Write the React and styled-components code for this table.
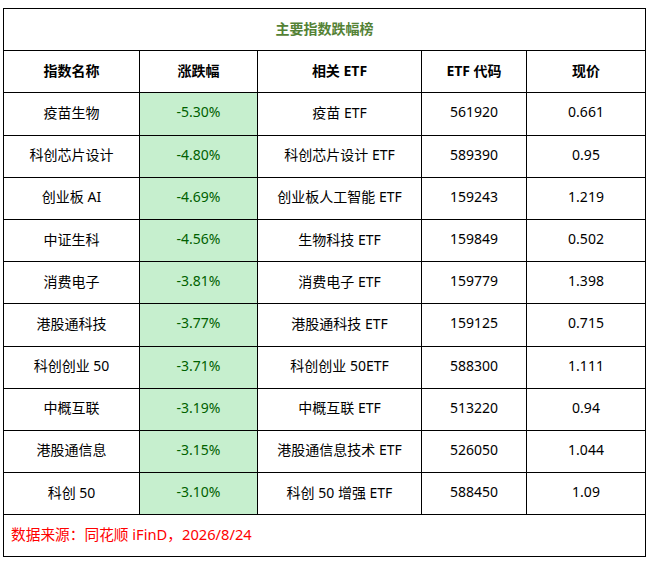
import styled, { createGlobalStyle } from 'styled-components';

const GlobalStyle = createGlobalStyle`
  body {
    margin: 0;
    background: #fff;
    font-family: "Noto Sans", "Noto Sans CJK SC", sans-serif;
  }
`;

const Wrap = styled.div`
  padding: 8px 0 0 3px;
`;

const Table = styled.table`
  border-collapse: collapse;
  table-layout: fixed;
  width: 642px;
  font-size: 14px;
  color: #000;
`;

const Row = styled.tr`
  height: 42.2px;
`;

const Cell = styled.td`
  border: 1px solid #000;
  padding: 0 0 4px;
  text-align: center;
  vertical-align: middle;
  background: ${(p) => (p.$hot ? '#c6efce' : '#fff')};
  color: ${(p) => (p.$hot ? '#006100' : '#000')};
  font-weight: ${(p) => (p.$bold ? 700 : 400)};
`;

const TitleCell = styled(Cell)`
  font-size: 14px;
  font-weight: 700;
  color: #548235;
`;

const NoteCell = styled(Cell)`
  padding-left: 7px;
  text-align: left;
  font-size: 14.7px;
  color: #ff0000;
`;

const cols = [136, 118, 164, 105, 119];

const rows = [
  ['疫苗生物', '-5.30%', '疫苗 ETF', '561920', '0.661'],
  ['科创芯片设计', '-4.80%', '科创芯片设计 ETF', '589390', '0.95'],
  ['创业板 AI', '-4.69%', '创业板人工智能 ETF', '159243', '1.219'],
  ['中证生科', '-4.56%', '生物科技 ETF', '159849', '0.502'],
  ['消费电子', '-3.81%', '消费电子 ETF', '159779', '1.398'],
  ['港股通科技', '-3.77%', '港股通科技 ETF', '159125', '0.715'],
  ['科创创业 50', '-3.71%', '科创创业 50ETF', '588300', '1.111'],
  ['中概互联', '-3.19%', '中概互联 ETF', '513220', '0.94'],
  ['港股通信息', '-3.15%', '港股通信息技术 ETF', '526050', '1.044'],
  ['科创 50', '-3.10%', '科创 50 增强 ETF', '588450', '1.09'],
];

const heads = ['指数名称', '涨跌幅', '相关 ETF', 'ETF 代码', '现价'];

export default function App() {
  return (
    <Wrap>
      <GlobalStyle />
      <Table>
        <colgroup>
          {cols.map((w, i) => (
            <col key={i} style={{ width: w }} />
          ))}
        </colgroup>
        <tbody>
          <Row>
            <TitleCell colSpan={5}>主要指数跌幅榜</TitleCell>
          </Row>
          <Row>
            {heads.map((h) => (
              <Cell key={h} $bold>
                {h}
              </Cell>
            ))}
          </Row>
          {rows.map((r) => (
            <Row key={r[0]}>
              {r.map((v, i) => (
                <Cell key={i} $hot={i === 1}>
                  {v}
                </Cell>
              ))}
            </Row>
          ))}
          <Row>
            <NoteCell colSpan={5}>数据来源：同花顺 iFinD，2026/8/24</NoteCell>
          </Row>
        </tbody>
      </Table>
    </Wrap>
  );
}
